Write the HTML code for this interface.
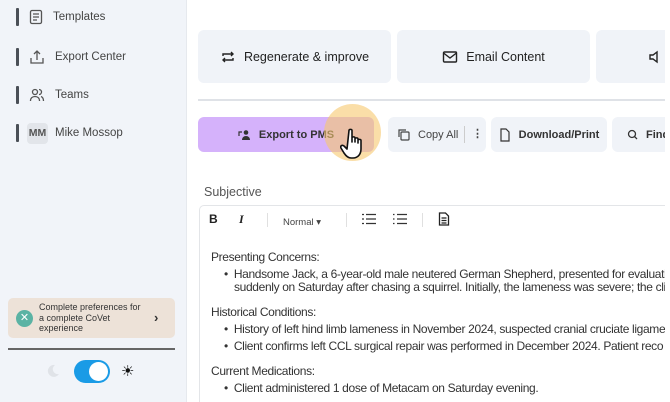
<!DOCTYPE html>
<html><head><meta charset="utf-8"><style>
*{box-sizing:border-box;margin:0;padding:0}
html,body{width:670px;height:402px;overflow:hidden}
body{font-family:"Liberation Sans",sans-serif;background:#fff;position:relative;color:#333}
.sb{position:absolute;left:0;top:0;width:187px;height:402px;background:#f1f4f9;border-right:1px solid #e6e9ee}
.nav{position:absolute;left:16px;height:20px;display:flex;align-items:center;font-size:11.5px;color:#444}
.nav .bar{width:3px;height:18px;background:#4a4f57;border-radius:1px;margin-right:10px}
.nav svg{margin-right:10px}
.abs{position:absolute}
.btn{position:absolute;background:#f0f3f8;border-radius:6px;display:flex;align-items:center;justify-content:center;font-size:12.5px;color:#222}
.btn svg{margin-right:8px;flex:none}
.t{position:absolute;font-size:12px;letter-spacing:-0.35px;color:#333;white-space:nowrap}
</style></head><body>
<div class="sb">
  <div class="nav" style="top:7px"><div class="bar"></div>
    <svg width="14" height="16" viewBox="0 0 14 16" fill="none" stroke="#555" stroke-width="1.3"><rect x="1.5" y="1.5" width="11" height="13" rx="1.5"/><path d="M4 5h6M4 8h6M4 11h4"/></svg>Templates</div>
  <div class="nav" style="top:47px"><div class="bar"></div>
    <svg width="16" height="16" viewBox="0 0 16 16" fill="none" stroke="#555" stroke-width="1.3"><path d="M8 11V2M5 5l3-3 3 3M2 9v5h12V9"/></svg>Export Center</div>
  <div class="nav" style="top:85px"><div class="bar"></div>
    <svg width="16" height="16" viewBox="0 0 16 16" fill="none" stroke="#555" stroke-width="1.3"><circle cx="6" cy="5" r="2.5"/><path d="M1.5 14c0-3 2-4.5 4.5-4.5s4.5 1.5 4.5 4.5M10 2.5a2.5 2.5 0 0 1 0 5M12 9.5c1.5.5 2.5 2 2.5 4.5"/></svg>Teams</div>
  <div class="nav" style="top:123px"><div class="bar"></div>
    <div style="width:21px;height:21px;background:#e2e5ea;border-radius:4px;font-size:10.5px;font-weight:bold;color:#555;display:flex;align-items:center;justify-content:center;margin-right:7px;margin-left:-2px">MM</div>Mike Mossop</div>
  <div class="abs" style="left:8px;top:298px;width:167px;height:40px;background:#ede2d8;border-radius:5px">
    <div class="abs" style="left:8px;top:12px;width:17px;height:17px;border-radius:50%;background:#5bb3a4;color:#fff;font-size:11px;text-align:center;line-height:17px">✕</div>
    <div class="abs" style="left:31px;top:4px;font-size:9px;line-height:10.5px;color:#333">Complete preferences for<br>a complete CoVet<br>experience</div>
    <div class="abs" style="left:146px;top:12px;font-size:13px;font-weight:bold;color:#333">›</div>
  </div>
  <div class="abs" style="left:8px;top:348px;width:167px;height:1.5px;background:#666"></div>
  <svg class="abs" style="left:46px;top:364px" width="14" height="14" viewBox="0 0 14 14"><path d="M9 1a6 6 0 1 0 4 9A5 5 0 0 1 9 1z" fill="#e0e3e8"/></svg>
  <div class="abs" style="left:74px;top:360px;width:36px;height:23px;border-radius:12px;background:#1a9be6"><div class="abs" style="left:15px;top:2px;width:19px;height:19px;border-radius:50%;background:#fff"></div></div>
  <div class="abs" style="left:121px;top:362px;font-size:15px;color:#111">☀</div>
</div>

<div class="btn" style="left:198px;top:30px;width:193px;height:53px">
  <svg width="16" height="16" viewBox="0 0 16 16" fill="none" stroke="#222" stroke-width="1.4"><path d="M3 7V5h10M11 3l2 2-2 2M13 9v2H3M5 13l-2-2 2-2"/></svg>Regenerate &amp; improve</div>
<div class="btn" style="left:397px;top:30px;width:193px;height:53px">
  <svg width="16" height="14" viewBox="0 0 16 14" fill="none" stroke="#222" stroke-width="1.4"><rect x="1.5" y="2" width="13" height="10" rx="1"/><path d="M1.5 3l6.5 5 6.5-5"/></svg>Email Content</div>
<div class="abs" style="left:596px;top:30px;width:69px;height:53px;background:#f0f3f8;border-radius:6px 0 0 6px">
  <svg class="abs" style="left:52px;top:20px" width="16" height="14" viewBox="0 0 16 14" fill="none" stroke="#222" stroke-width="1.4"><path d="M2 5h3l4-3v10L5 9H2z"/></svg></div>
<div class="abs" style="left:198px;top:99px;width:467px;height:1.5px;background:#dfe2e7"></div>

<div class="btn" style="left:198px;top:117px;width:176px;height:35px;background:#d5b2fb;font-size:11px;font-weight:bold;color:#333">
  <svg width="13" height="12" viewBox="0 0 13 12" fill="#333"><circle cx="8" cy="3.5" r="2.3"/><path d="M4 11c0-2.5 1.8-4 4-4s4 1.5 4 4z"/><path d="M1 7V3h3" fill="none" stroke="#333" stroke-width="1.2"/></svg>Export to PMS</div>
<div class="btn" style="left:388px;top:117px;width:98px;height:35px;font-size:11px;justify-content:flex-start;padding-left:9px;color:#444">
  <svg width="13" height="13" viewBox="0 0 13 13" fill="none" stroke="#444" stroke-width="1.2"><rect x="4" y="4" width="8" height="8" rx="1"/><path d="M2 9V2h7"/></svg>Copy All
  <div class="abs" style="left:76px;top:9px;width:1px;height:17px;background:#ccc"></div>
  <div class="abs" style="left:84px;top:10px;font-size:11px;font-weight:bold">⋮</div></div>
<div class="btn" style="left:491px;top:117px;width:116px;height:35px;font-size:11px;font-weight:bold;color:#333">
  <svg width="12" height="14" viewBox="0 0 12 14" fill="none" stroke="#333" stroke-width="1.2"><path d="M2 1h5l3 3v9H2z"/></svg>Download/Print</div>
<div class="btn" style="left:612px;top:117px;width:53px;height:35px;font-size:11px;font-weight:bold;justify-content:flex-start;padding-left:14px;color:#333;border-radius:6px 0 0 6px;overflow:hidden;white-space:nowrap">
  <svg width="12" height="12" viewBox="0 0 12 12" fill="none" stroke="#333" stroke-width="1.3"><circle cx="6" cy="5" r="3.5"/><path d="M8.5 7.5l2.5 2.5"/></svg>Find</div>

<div class="abs" style="left:324px;top:104px;width:57px;height:57px;border-radius:50%;background:rgba(246,200,110,0.6)"></div>
<svg class="abs" style="left:340px;top:127px" width="28" height="34" viewBox="0 0 28 34"><path d="M9 3.5c0-1.5 3-1.5 3 0V15V11c0-1.5 3-1.5 3 0v4V12c0-1.5 3-1.5 3 0v4V13.5c0-1.5 3-1.5 3 0V22c0 5-3 9-8 9h-2c-3 0-5-2-7-5l-3-5c-1-2 1-3.5 3-2l3 3z" fill="#fff" stroke="#111" stroke-width="1.6" stroke-linejoin="round"/></svg>

<div class="abs" style="left:204px;top:185px;font-size:12.5px;color:#555">Subjective</div>
<div class="abs" style="left:199px;top:205px;width:466px;height:197px;border:1px solid #e3e5e8;border-bottom:none;border-right:none;border-radius:5px 0 0 0"></div>
<div class="abs" style="left:209px;top:212px;font-size:12px;font-weight:bold;color:#222">B</div>
<div class="abs" style="left:239px;top:212px;font-size:12px;font-weight:bold;font-style:italic;color:#222;font-family:'Liberation Serif',serif">I</div>
<div class="abs" style="left:267px;top:213px;width:1px;height:14px;background:#e0e0e0"></div>
<div class="abs" style="left:283px;top:217px;font-size:9.5px;color:#444">Normal ▾</div>
<div class="abs" style="left:346px;top:213px;width:1px;height:14px;background:#e0e0e0"></div>
<svg class="abs" style="left:361px;top:213px" width="15" height="12" viewBox="0 0 15 12" stroke="#333" stroke-width="1.3"><path d="M5 1.5h10M5 6h10M5 10.5h10M1 1.5h2M1 6h2M1 10.5h2"/></svg>
<svg class="abs" style="left:392px;top:213px" width="15" height="12" viewBox="0 0 15 12" stroke="#333" stroke-width="1.3"><path d="M5 1.5h10M5 6h10M5 10.5h10M1 1.5h1.5M1 6h1.5M1 10.5h1.5"/></svg>
<div class="abs" style="left:422px;top:213px;width:1px;height:14px;background:#e0e0e0"></div>
<svg class="abs" style="left:438px;top:212px" width="12" height="14" viewBox="0 0 12 14" fill="none" stroke="#222" stroke-width="1.3"><path d="M1.5 1h6l3 3v9h-9z M3.5 6h5M3.5 8.5h5M3.5 11h5"/></svg>

<div class="abs" style="left:200px;top:240px;width:465px;height:160px;overflow:hidden">
<div class="t" style="left:11px;top:10px">Presenting Concerns:</div>
<div class="t" style="left:24px;top:27px">•&nbsp; Handsome Jack, a 6-year-old male neutered German Shepherd, presented for evaluation</div>
<div class="t" style="left:34px;top:40px">suddenly on Saturday after chasing a squirrel. Initially, the lameness was severe; the cli</div>
<div class="t" style="left:11px;top:65px">Historical Conditions:</div>
<div class="t" style="left:24px;top:82px">•&nbsp; History of left hind limb lameness in November 2024, suspected cranial cruciate ligame</div>
<div class="t" style="left:24px;top:99px">•&nbsp; Client confirms left CCL surgical repair was performed in December 2024. Patient reco</div>
<div class="t" style="left:11px;top:124px">Current Medications:</div>
<div class="t" style="left:24px;top:141px">•&nbsp; Client administered 1 dose of Metacam on Saturday evening.</div>
</div>
</body></html>
